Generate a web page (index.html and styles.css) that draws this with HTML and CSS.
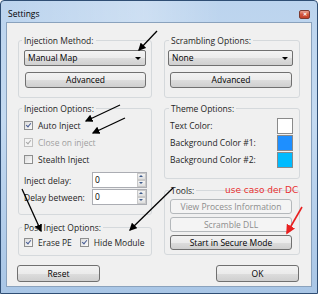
FILE: index.html
```html
<!DOCTYPE html>
<html lang="en">
<head>
    <meta charset="UTF-8">
    <title>Settings</title>
    <link rel="stylesheet" href="styles.css">
</head>
<body>

    <div class="window">
        <!-- Title bar -->
        <div class="titlebar">
            <span class="title">Settings</span>
            <span class="close">&#x2715;</span>
        </div>

        <div class="client">
            <div class="columns">
                <!-- Left column -->
                <div class="col col-left">
                    <div class="group g-method">
                        <span class="legend">Injection Method:</span>
                        <div class="combo">Manual Map<span class="caret"></span></div>
                        <button class="btn">Advanced</button>
                    </div>

                    <div class="group g-options">
                        <span class="legend">Injection Options:</span>
                        <label class="check"><span class="box checked"></span>Auto Inject</label>
                        <label class="check disabled"><span class="box checked"></span>Close on inject</label>
                        <label class="check"><span class="box"></span>Stealth Inject</label>
                        <div class="field">
                            <span class="field-label">Inject delay:</span>
                            <div class="spin"><span class="spin-val">0</span><span class="spin-btns"><i class="up"></i><i class="down"></i></span></div>
                        </div>
                        <div class="field">
                            <span class="field-label">Delay between:</span>
                            <div class="spin"><span class="spin-val">0</span><span class="spin-btns"><i class="up"></i><i class="down"></i></span></div>
                        </div>
                    </div>

                    <div class="group g-post">
                        <span class="legend">Post Inject Options:</span>
                        <div class="row">
                            <label class="check"><span class="box checked"></span>Erase PE</label>
                            <label class="check"><span class="box checked"></span>Hide Module</label>
                        </div>
                    </div>
                </div>

                <!-- Right column -->
                <div class="col col-right">
                    <div class="group g-method">
                        <span class="legend">Scrambling Options:</span>
                        <div class="combo">None<span class="caret"></span></div>
                        <button class="btn">Advanced</button>
                    </div>

                    <div class="group g-theme">
                        <span class="legend">Theme Options:</span>
                        <div class="swatch-row"><span>Text Color:</span><span class="swatch white"></span></div>
                        <div class="swatch-row"><span>Background Color #1:</span><span class="swatch blue1"></span></div>
                        <div class="swatch-row"><span>Background Color #2:</span><span class="swatch blue2"></span></div>
                    </div>

                    <div class="group g-tools">
                        <span class="legend">Tools:</span>
                        <button class="btn" disabled>View Process Information</button>
                        <button class="btn" disabled>Scramble DLL</button>
                        <button class="btn">Start in Secure Mode</button>
                    </div>
                </div>
            </div>

            <div class="footer">
                <button class="btn btn-wide">Reset</button>
                <button class="btn btn-wide">OK</button>
            </div>
        </div>

        <!-- Annotations drawn over the screenshot -->
        <span class="note">use caso der DC</span>
        <svg class="arrows" width="320" height="296" viewBox="0 0 320 296">
            <defs>
                <marker id="head" markerWidth="6" markerHeight="6" refX="5" refY="3" orient="auto">
                    <path d="M0,0 L6,3 L0,6 z" fill="#000"/>
                </marker>
                <marker id="headRed" markerWidth="6" markerHeight="6" refX="5" refY="3" orient="auto">
                    <path d="M0,0 L6,3 L0,6 z" fill="#e82020"/>
                </marker>
            </defs>
            <line x1="157" y1="31" x2="139" y2="50" stroke="#000" stroke-width="1.3" marker-end="url(#head)"/>
            <line x1="120" y1="105" x2="86" y2="121" stroke="#000" stroke-width="1.3" marker-end="url(#head)"/>
            <line x1="125" y1="118" x2="93" y2="133" stroke="#000" stroke-width="1.3" marker-end="url(#head)"/>
            <line x1="22" y1="189" x2="41" y2="231" stroke="#000" stroke-width="1.3" marker-end="url(#head)"/>
            <line x1="173" y1="188" x2="130" y2="230" stroke="#000" stroke-width="1.3" marker-end="url(#head)"/>
            <line x1="302" y1="207" x2="287" y2="233" stroke="#e82020" stroke-width="1.6" marker-end="url(#headRed)"/>
        </svg>
    </div>

</body>
</html>
```

FILE: styles.css
```css
/* Basic Styling */
body {
    margin: 0;
    background: #ffffff;
    font-family: "Open Sans", "Noto Sans", sans-serif;
    font-size: 8.5px;
    color: #1e1e1e;
}

/* Window frame */
.window {
    position: relative;
    width: 318px;
    height: 294px;
    box-sizing: border-box;
    border: 1px solid #2f4e74;
    border-radius: 4px 4px 0 0;
    background: linear-gradient(180deg, #bcd4ee 0%, #c4daf1 40%, #a9c6e6 100%);
    padding: 0 5px 6px 5px;
    display: flex;
    flex-direction: column;
}

.titlebar {
    height: 21px;
    flex: none;
    display: flex;
    justify-content: space-between;
    background: linear-gradient(90deg, rgba(255,255,255,0) 0%, rgba(255,255,255,0.25) 45%, rgba(255,255,255,0) 70%);
}

.title {
    margin: 7px 0 0 2px;
    line-height: 12px;
    color: #000;
}

.close {
    width: 9px;
    height: 7px;
    margin: 9px 2px 0 0;
    border: 1px solid #7c3a30;
    border-radius: 2px;
    background: linear-gradient(180deg, #e8a090 0%, #d2573e 50%, #c24028 100%);
    color: #fff;
    font-size: 5px;
    font-weight: bold;
    line-height: 7px;
    text-align: center;
}

/* Client area */
.client {
    flex: 1;
    background: #f0f0f0;
    border: 1px solid #8aa2bd;
    padding: 17px 11px 0 11px;
}

.columns {
    display: flex;
    gap: 12px;
}

.col {
    display: flex;
    flex-direction: column;
}

.col-left {
    width: 134px;
}

.col-right {
    width: 136px;
}

/* Group boxes */
.group {
    box-sizing: border-box;
    border: 1px solid #d5d9dc;
    border-radius: 3px;
    padding: 0 5px;
}

.legend {
    display: table;
    margin: -6px 0 0 -2px;
    padding: 0 2px;
    line-height: 11px;
    background: #f0f0f0;
    color: #1e1e1e;
}

.col-right .group {
    padding: 0 6px 0 3px;
}

.col-right .legend {
    margin-left: 1px;
}

.g-method {
    height: 58px;
}

.g-options {
    height: 107px;
    margin-top: 10px;
}

.g-post {
    height: 29px;
    margin-top: 12px;
}

.g-theme {
    height: 71px;
    margin-top: 10px;
}

.g-tools {
    height: 65px;
    margin-top: 11px;
}

/* Combo box */
.combo {
    position: relative;
    box-sizing: border-box;
    height: 16px;
    margin-top: 4px;
    line-height: 14px;
    padding-left: 3px;
    border: 1px solid #707070;
    border-radius: 2px;
    background: linear-gradient(180deg, #f3f3f3 0%, #ebebeb 50%, #dddddd 51%, #d0d0d0 100%);
    color: #000;
}

.caret {
    position: absolute;
    right: 4px;
    top: 6px;
    border-left: 3px solid transparent;
    border-right: 3px solid transparent;
    border-top: 3px solid #000;
}

/* Buttons */
.btn {
    display: block;
    box-sizing: border-box;
    width: calc(100% - 1px);
    height: 16px;
    margin: 6px 0 0 1px;
    padding: 0;
    border: 1px solid #707070;
    border-radius: 3px;
    background: linear-gradient(180deg, #f2f2f2 0%, #ebebeb 50%, #dddddd 51%, #cfcfcf 100%);
    font-family: inherit;
    font-size: 8.5px;
    line-height: 14px;
    color: #000;
}

.col-right .btn {
    width: calc(100% - 3px);
    margin-left: 2px;
}

.btn:disabled {
    border-color: #b4b8bb;
    background: #f4f4f4;
    color: #8d8d8d;
}

.g-tools .btn {
    height: 15px;
    margin-top: 3px;
    line-height: 13px;
}

/* Checkboxes */
.check {
    display: flex;
    align-items: center;
    height: 17px;
    white-space: nowrap;
    color: #1e1e1e;
}

.g-options .check:first-of-type {
    margin-top: 3px;
}

.check.disabled {
    color: #a0a0a0;
}

.box {
    position: relative;
    flex: none;
    width: 7px;
    height: 7px;
    margin-right: 5px;
    border: 1px solid #8e8f8f;
    background: linear-gradient(135deg, #dcdcdc 0%, #fbfbfb 100%);
}

.box.checked::after {
    content: "";
    position: absolute;
    left: 2px;
    top: 0;
    width: 2px;
    height: 4px;
    border-right: 1.5px solid #4a5f97;
    border-bottom: 1.5px solid #4a5f97;
    transform: rotate(40deg);
}

.disabled .box {
    border-color: #c0c0c0;
    background: #f4f4f4;
}

.disabled .box.checked::after {
    border-color: #a8a8a8;
}

.row {
    display: flex;
    gap: 8px;
    margin-top: 1px;
}

/* Spinner fields */
.field {
    display: flex;
    align-items: center;
    margin-top: 4px;
    height: 16px;
}

.field + .field {
    margin-top: 1px;
}

.field-label {
    width: 68px;
    flex: none;
    white-space: nowrap;
}

.spin {
    display: flex;
    flex: none;
    box-sizing: border-box;
    width: 55px;
    height: 16px;
    border: 1px solid #abadb3;
    background: #fff;
}

.spin-val {
    flex: 1;
    padding-left: 2px;
    line-height: 14px;
    color: #000;
}

.spin-btns {
    display: flex;
    flex-direction: column;
    width: 9px;
}

.spin-btns i {
    flex: 1;
    position: relative;
    background: linear-gradient(180deg, #f4f4f4, #dedede);
    border: 1px solid #c9c9c9;
}

.spin-btns .up::after,
.spin-btns .down::after {
    content: "";
    position: absolute;
    left: 1px;
    top: 1px;
    border-left: 2px solid transparent;
    border-right: 2px solid transparent;
}

.spin-btns .up::after {
    border-bottom: 2px solid #3c5a8c;
}

.spin-btns .down::after {
    border-top: 2px solid #3c5a8c;
}

/* Theme swatches */
.swatch-row {
    display: flex;
    align-items: center;
    justify-content: space-between;
    height: 17px;
    padding-left: 2px;
}

.swatch-row:first-of-type {
    margin-top: 3px;
}

.swatch {
    box-sizing: border-box;
    width: 16px;
    height: 16px;
    border: 1px solid #8a8a8a;
}

.swatch.white {
    background: #ffffff;
}

.swatch.blue1 {
    background: #1e8fff;
}

.swatch.blue2 {
    background: #00bbff;
}

/* Bottom buttons */
.footer {
    display: flex;
    justify-content: space-between;
    margin: 9px 1px 0 -1px;
}

.btn-wide {
    width: 83px;
    height: 17px;
    margin: 0;
    line-height: 15px;
}

/* Annotations */
.note {
    position: absolute;
    left: 224px;
    top: 184px;
    line-height: 11px;
    color: #e83030;
    font-family: "DejaVu Sans", sans-serif;
    font-size: 9px;
}

.arrows {
    position: absolute;
    left: -1px;
    top: -1px;
    pointer-events: none;
}
```
